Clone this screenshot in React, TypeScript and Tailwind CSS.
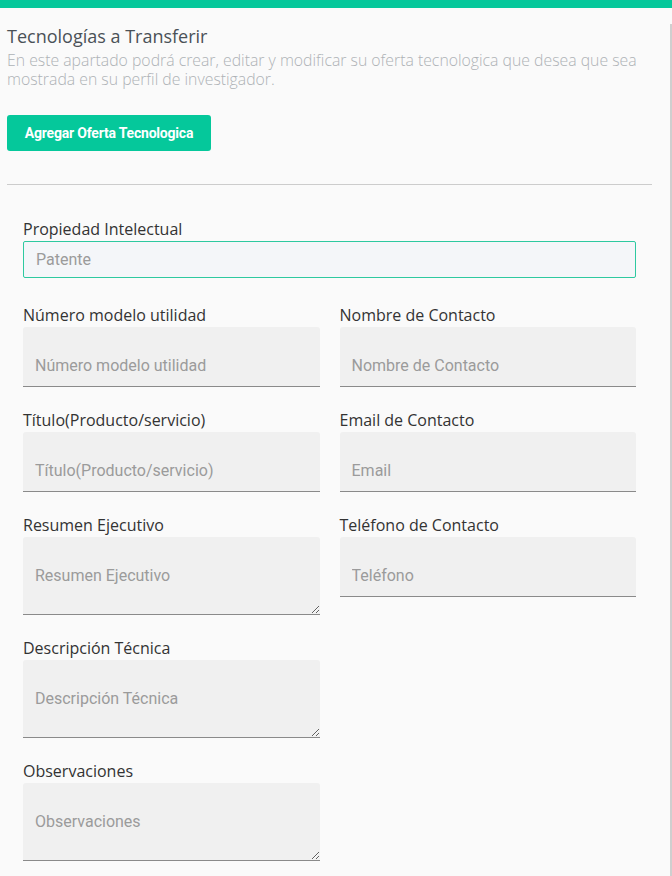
import React from "react";

const OPEN = { fontFamily: '"Open Sans", "Liberation Sans", sans-serif' };
const ROBOTO = { fontFamily: 'Roboto, "Liberation Sans", sans-serif' };

function Label({ children }: { children: React.ReactNode }) {
  return (
    <div className="text-[16px] leading-[22px] text-[#333333] mb-[1px]" style={OPEN}>
      {children}
    </div>
  );
}

function Filled({ label, placeholder }: { label: string; placeholder: string }) {
  return (
    <div className="mb-[22px]">
      <Label>{label}</Label>
      <input
        placeholder={placeholder}
        className="block w-full h-[60px] bg-[#f0f0f0] border-b border-[#8a8a8a] rounded-t-[3px] px-[12px] pt-[18px] text-[16px] text-[#444] placeholder:text-[#9b9b9b] outline-none"
        style={ROBOTO}
      />
    </div>
  );
}

function Area({ label, placeholder }: { label: string; placeholder: string }) {
  return (
    <div className="mb-[22px]">
      <Label>{label}</Label>
      <textarea
        placeholder={placeholder}
        className="block w-full h-[78px] bg-[#f0f0f0] border-b border-[#8a8a8a] rounded-t-[3px] px-[12px] pt-[29px] text-[16px] leading-[20px] text-[#444] placeholder:text-[#9b9b9b] outline-none resize-y"
        style={ROBOTO}
      />
    </div>
  );
}

export default function App() {
  return (
    <div className="min-h-[876px] bg-[#fafafa] flex flex-col overflow-hidden">
      <div className="h-[8px] bg-[#05c89b]" />
      <div className="flex flex-1">
        <div className="flex-1">
          <div className="pl-[7px] pr-[18px] pt-[16px]">
            <h1 className="text-[18px] leading-[24px] text-[#4a5157]" style={OPEN}>
              Tecnologías a Transferir
            </h1>
            <p className="text-[15.8px] leading-[19px] font-light text-[#aeb2b6] mt-[3px]" style={OPEN}>
              En este apartado podrá crear, editar y modificar su oferta tecnologica que desea que sea mostrada en su
              perfil de investigador.
            </p>
            <button
              className="mt-[26px] w-[204px] h-[36px] rounded-[3px] bg-[#05c89b] text-white text-[14px] font-bold tracking-[-0.2px]"
              style={ROBOTO}
            >
              Agregar Oferta Tecnologica
            </button>
            <div className="mt-[33px] h-px bg-[#cccccc]" />
          </div>
          <div className="pl-[23px] pr-[34px] pt-[33px]">
            <div className="mb-[26px]">
              <Label>Propiedad Intelectual</Label>
              <input
                placeholder="Patente"
                className="block w-full h-[37px] bg-[#f4f6f9] border border-[#2ec9a0] rounded-[2px] px-[12px] text-[16px] text-[#444] placeholder:text-[#9b9b9b] outline-none"
                style={ROBOTO}
              />
            </div>
            <div className="grid grid-cols-2 gap-x-[20px]">
              <div>
                <Filled label="Número modelo utilidad" placeholder="Número modelo utilidad" />
                <Filled label="Título(Producto/servicio)" placeholder="Título(Producto/servicio)" />
                <Area label="Resumen Ejecutivo" placeholder="Resumen Ejecutivo" />
                <Area label="Descripción Técnica" placeholder="Descripción Técnica" />
                <Area label="Observaciones" placeholder="Observaciones" />
              </div>
              <div>
                <Filled label="Nombre de Contacto" placeholder="Nombre de Contacto" />
                <Filled label="Email de Contacto" placeholder="Email" />
                <Filled label="Teléfono de Contacto" placeholder="Teléfono" />
              </div>
            </div>
          </div>
        </div>
        <div className="w-[2px] mt-[16px] bg-[#cfcfcf]" />
      </div>
    </div>
  );
}
